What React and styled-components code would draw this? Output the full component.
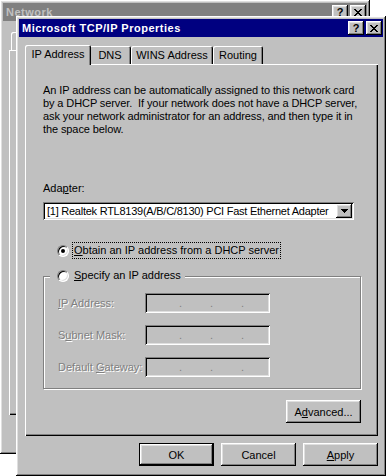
import styled, { createGlobalStyle } from "styled-components";

const GlobalStyle = createGlobalStyle`
  html, body {
    margin: 0;
    padding: 0;
    background: #fff;
  }
  body {
    font-family: "Liberation Sans", Arial, sans-serif;
    font-size: 11px;
    color: #000;
  }
`;

const CloseGlyph = () => (
  <svg width="8" height="7" viewBox="0 0 8 7" shapeRendering="crispEdges">
    <path
      fill="#000"
      d="M0 0h2v1H0zM6 0h2v1H6zM1 1h2v1H1zM5 1h2v1H5zM2 2h4v1H2zM3 3h2v1H3zM2 4h4v1H2zM1 5h2v1H1zM5 5h2v1H5zM0 6h2v1H0zM6 6h2v1H6z"
    />
  </svg>
);

const ArrowGlyph = () => (
  <svg width="7" height="4" viewBox="0 0 7 4" shapeRendering="crispEdges">
    <path fill="#000" d="M0 0h7v1H0zM1 1h5v1H1zM2 2h3v1H2zM3 3h1v1H3z" />
  </svg>
);

const IpSegments = () => (
  <>
    <Segment>.</Segment>
    <Segment>.</Segment>
    <Segment>.</Segment>
  </>
);

export default function App() {
  return (
    <>
      <GlobalStyle />
      <Desktop>
        <BackWindow>
          <TitleBar $active={false}>
            <span>Network</span>
            <Controls>
              <CaptionButton>?</CaptionButton>
              <CaptionButton>
                <CloseGlyph />
              </CaptionButton>
            </Controls>
          </TitleBar>
          <BackTabs>
            <Tab>Identification</Tab>
          </BackTabs>
          <BackPanel />
        </BackWindow>

        <Dialog>
          <TitleBar $active>
            <span>Microsoft TCP/IP Properties</span>
            <Controls>
              <CaptionButton>?</CaptionButton>
              <CaptionButton>
                <CloseGlyph />
              </CaptionButton>
            </Controls>
          </TitleBar>

          <Tabs>
            <Tab $selected $w={62}>IP Address</Tab>
            <Tab $w={42}>DNS</Tab>
            <Tab $w={82}>WINS Address</Tab>
            <Tab $w={50}>Routing</Tab>
          </Tabs>

          <Panel>
            <Description>
              An IP address can be automatically assigned to this network card
              <br />
              by a DHCP server.  If your network does not have a DHCP server,
              <br />
              ask your network administrator for an address, and then type it in
              <br />
              the space below.
            </Description>

            <AdapterLabel>
              Ada<u>p</u>ter:
            </AdapterLabel>
            <Select>
              <SelectText>
                [1] Realtek RTL8139(A/B/C/8130) PCI Fast Ethernet Adapter
              </SelectText>
              <DropButton>
                <ArrowGlyph />
              </DropButton>
            </Select>

            <RadioRow>
              <Radio $checked />
              <RadioLabel $focused>
                <u>O</u>btain an IP address from a DHCP server
              </RadioLabel>
            </RadioRow>

            <GroupBox>
              <Legend>
                <Radio />
                <RadioLabel>
                  <u>S</u>pecify an IP address
                </RadioLabel>
              </Legend>

              <FieldRow>
                <FieldLabel>
                  <u>I</u>P Address:
                </FieldLabel>
                <IpField>
                  <IpSegments />
                </IpField>
              </FieldRow>
              <FieldRow>
                <FieldLabel>
                  S<u>u</u>bnet Mask:
                </FieldLabel>
                <IpField>
                  <IpSegments />
                </IpField>
              </FieldRow>
              <FieldRow>
                <FieldLabel>
                  Default <u>G</u>ateway:
                </FieldLabel>
                <IpField>
                  <IpSegments />
                </IpField>
              </FieldRow>
            </GroupBox>

            <AdvancedButton>
              A<u>d</u>vanced...
            </AdvancedButton>
          </Panel>

          <ButtonRow>
            <Button $default>OK</Button>
            <Button>Cancel</Button>
            <Button>
              <u>A</u>pply
            </Button>
          </ButtonRow>
        </Dialog>
      </Desktop>
    </>
  );
}

const raised = `
  background: #c0c0c0;
  box-shadow: inset -1px -1px #000, inset 1px 1px #fff,
    inset -2px -2px #808080, inset 2px 2px #dfdfdf;
`;

const sunken = `
  box-shadow: inset 1px 1px #808080, inset -1px -1px #fff,
    inset 2px 2px #000, inset -2px -2px #dfdfdf;
`;

const Desktop = styled.div`
  position: relative;
  width: 387px;
  height: 476px;
  overflow: hidden;
  background: #fff;
`;

const Window = styled.div`
  position: absolute;
  display: flex;
  flex-direction: column;
  box-sizing: border-box;
  padding: 3px;
  ${raised}
`;

const BackWindow = styled(Window)`
  left: 0;
  top: 0;
  width: 370px;
  height: 454px;
`;

const Dialog = styled(Window)`
  left: 16px;
  top: 16px;
  width: 370px;
  height: 460px;
`;

const TitleBar = styled.div`
  height: 18px;
  flex: none;
  display: flex;
  align-items: center;
  justify-content: space-between;
  padding: 0 1px 0 3px;
  background: ${(p) => (p.$active ? "#000080" : "#808080")};
  color: ${(p) => (p.$active ? "#fff" : "#c0c0c0")};
  font-weight: bold;
  font-size: 11px;
  letter-spacing: 0.5px;
  white-space: nowrap;
`;

const Controls = styled.div`
  display: flex;
  gap: 2px;
  letter-spacing: 0;
`;

const CaptionButton = styled.div`
  width: 16px;
  height: 14px;
  display: flex;
  align-items: center;
  justify-content: center;
  color: #000;
  font-weight: bold;
  font-size: 11px;
  line-height: 14px;
  ${raised}
`;

const BackTabs = styled.div`
  display: flex;
  align-items: flex-end;
  height: 18px;
  margin-top: 11px;
  padding: 0 6px 0 8px;
`;

const BackPanel = styled.div`
  height: 365px;
  margin: 0 5px 0 6px;
  box-shadow: inset 1px 1px #fff, inset -1px -1px #000, inset -2px -2px #808080;
`;

const Tabs = styled.div`
  display: flex;
  align-items: flex-end;
  height: 19px;
  margin-top: 8px;
  padding-left: 8px;
`;

const Tab = styled.div`
  position: relative;
  z-index: ${(p) => (p.$selected ? 1 : 0)};
  box-sizing: border-box;
  width: ${(p) => (p.$w ? `${p.$w + (p.$selected ? 4 : 0)}px` : "80px")};
  height: ${(p) => (p.$selected ? "20px" : "18px")};
  margin: ${(p) => (p.$selected ? "0 -2px -1px" : "0")};
  padding-bottom: ${(p) => (p.$selected ? "2px" : "0")};
  display: flex;
  align-items: center;
  justify-content: center;
  white-space: nowrap;
  background: #c0c0c0;
  border-radius: 2px 2px 0 0;
  box-shadow: inset 1px 1px #fff, inset -1px 0 #000, inset -2px 0 #808080;
`;

const Panel = styled.div`
  height: 372px;
  box-sizing: border-box;
  margin: 0 5px 0 6px;
  padding: 20px 17px 0 18px;
  display: flex;
  flex-direction: column;
  box-shadow: inset 1px 1px #fff, inset -1px -1px #000, inset -2px -2px #808080;
`;

const Description = styled.p`
  margin: 0;
  line-height: 13px;
  letter-spacing: -0.1px;
  white-space: pre;
`;

const AdapterLabel = styled.div`
  margin-top: 46px;
  line-height: 13px;
`;

const Select = styled.div`
  margin-top: 7px;
  width: 311px;
  height: 18px;
  box-sizing: border-box;
  padding: 2px;
  display: flex;
  align-items: center;
  background: #fff;
  ${sunken}
`;

const SelectText = styled.span`
  flex: 1;
  padding-left: 2px;
  letter-spacing: -0.25px;
  white-space: nowrap;
  overflow: hidden;
`;

const DropButton = styled.div`
  width: 16px;
  height: 14px;
  display: flex;
  align-items: center;
  justify-content: center;
  ${raised}
`;

const RadioRow = styled.div`
  margin-top: 23px;
  margin-left: 14px;
  display: flex;
  align-items: center;
  gap: 4px;
  height: 15px;
`;

const Radio = styled.span`
  position: relative;
  flex: none;
  width: 12px;
  height: 12px;
  box-sizing: border-box;
  border-radius: 50%;
  background: #fff;
  border: 1px solid;
  border-color: #808080 #fff #fff #808080;
  box-shadow: inset 1px 1px #000, inset -1px -1px #dfdfdf;

  &::after {
    content: "";
    display: ${(p) => (p.$checked ? "block" : "none")};
    position: absolute;
    left: 3px;
    top: 3px;
    width: 4px;
    height: 4px;
    border-radius: 50%;
    background: #000;
  }
`;

const RadioLabel = styled.span`
  padding: 1px;
  line-height: 13px;
  white-space: nowrap;
  outline: ${(p) => (p.$focused ? "1px dotted #000" : "none")};
`;

const GroupBox = styled.div`
  margin-top: 18px;
  width: 318px;
  box-sizing: border-box;
  padding: 0 0 11px 14px;
  display: flex;
  flex-direction: column;
  gap: 12px;
  border: 1px solid #808080;
  box-shadow: inset 1px 1px #fff, 1px 1px #fff;
`;

const Legend = styled.div`
  align-self: flex-start;
  margin: -9px 0 -2px -8px;
  padding: 0 3px 0 7px;
  height: 15px;
  display: flex;
  align-items: center;
  gap: 4px;
  background: #c0c0c0;
`;

const FieldRow = styled.div`
  display: flex;
  align-items: center;
  height: 20px;
`;

const FieldLabel = styled.span`
  width: 87px;
  color: #808080;
  text-shadow: 1px 1px 0 #fff;
  white-space: nowrap;
`;

const IpField = styled.div`
  width: 125px;
  height: 20px;
  box-sizing: border-box;
  padding: 0 0 0 6px;
  display: flex;
  align-items: center;
  color: #808080;
  ${sunken}
`;

const Segment = styled.span`
  width: 31px;
  text-align: right;
  line-height: 13px;
`;

const Button = styled.div`
  width: 75px;
  height: 23px;
  box-sizing: border-box;
  display: flex;
  align-items: center;
  justify-content: center;
  white-space: nowrap;
  ${raised}
  ${(p) =>
    p.$default &&
    `
    border: 1px solid #000;
  `}
`;

const AdvancedButton = styled(Button)`
  align-self: flex-end;
  margin-top: 11px;
`;

const ButtonRow = styled.div`
  display: flex;
  justify-content: flex-end;
  gap: 7px;
  margin: 7px 5px 0 0;
`;
